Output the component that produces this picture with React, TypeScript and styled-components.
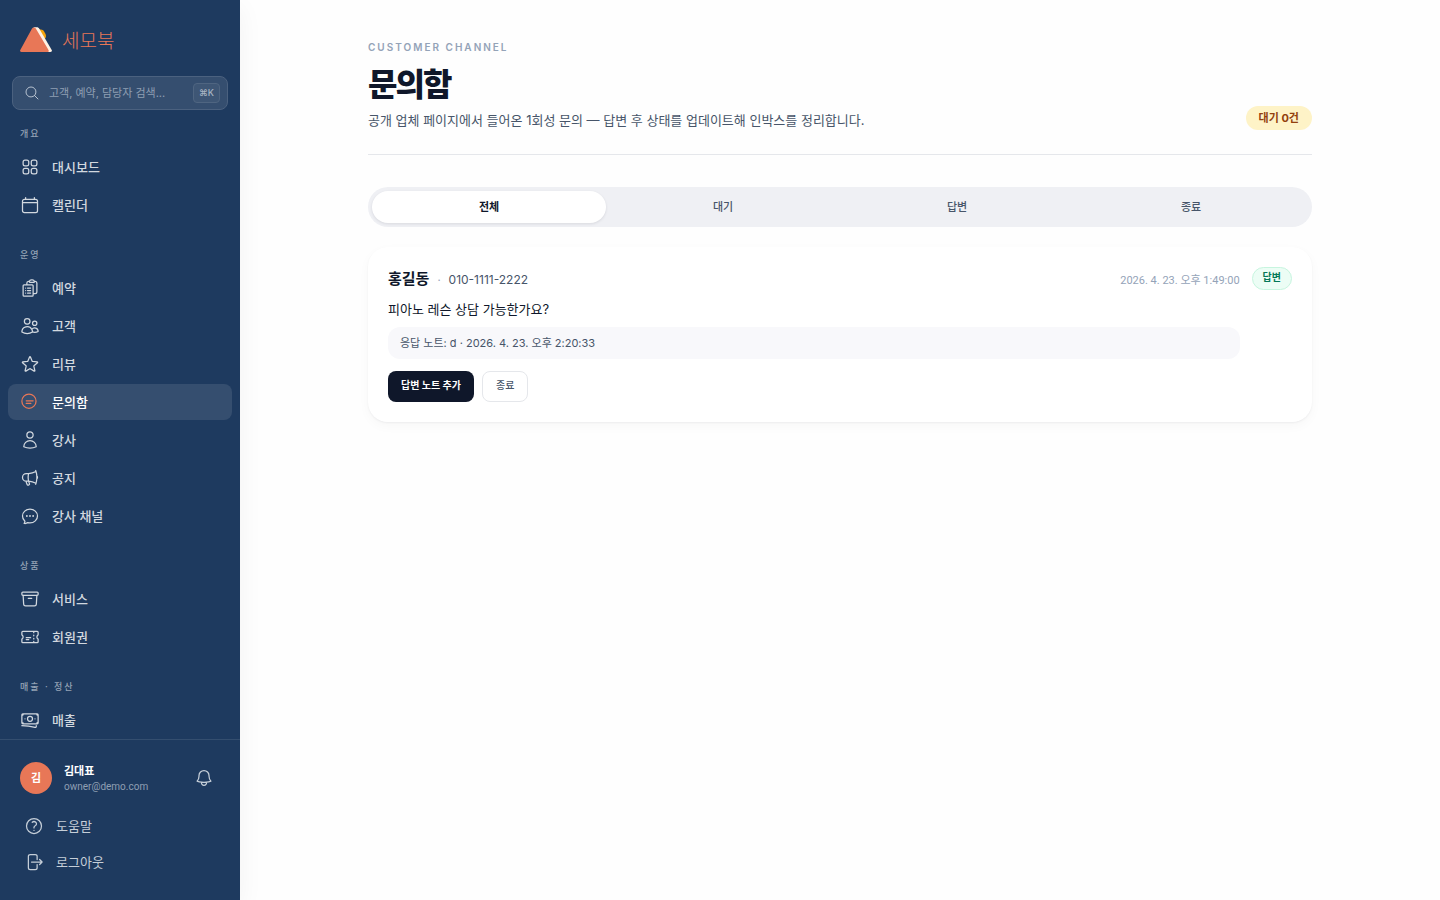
import React from "react";
import styled, { createGlobalStyle } from "styled-components";
import {
  HiOutlineSquares2X2, HiOutlineClipboardDocumentList, HiOutlineUsers, HiOutlineStar,
  HiOutlineUser, HiOutlineMegaphone, HiOutlineChatBubbleOvalLeftEllipsis, HiOutlineArchiveBox,
  HiOutlineTicket, HiOutlineBanknotes, HiOutlineBell, HiOutlineQuestionMarkCircle,
  HiOutlineArrowRightOnRectangle, HiOutlineMagnifyingGlass,
} from "react-icons/hi2";

const GlobalStyle = createGlobalStyle`
  *, *::before, *::after { box-sizing: border-box; }
  body {
    margin: 0;
    background: #fefefe;
    color: #0f172a;
    font-family: Inter, "Noto Sans CJK KR", sans-serif;
    -webkit-font-smoothing: antialiased;
  }
  h1, h2, p, ul { margin: 0; padding: 0; }
  ul { list-style: none; }
  button, input { font: inherit; }
  button { cursor: pointer; }
  a { color: inherit; text-decoration: none; }
`;

const Shell = styled.div`
  display: flex;
  min-height: 100vh;
`;

const Sidebar = styled.aside`
  position: sticky;
  top: 0;
  flex: 0 0 240px;
  min-width: 0;
  display: flex;
  flex-direction: column;
  height: 100vh;
  background: #1e3a5f;
  color: #d2d8df;
  box-shadow: 0 8px 24px rgba(15, 23, 42, 0.05);
`;

const Brand = styled.a`
  display: flex;
  align-items: flex-start;
  gap: 10px;
  flex: none;
  padding: 24px 20px 16px;
  color: #e87757;
  font-size: 19px;
  line-height: 36px;
  font-weight: 300;
`;

const SearchBox = styled.label`
  display: flex;
  align-items: center;
  gap: 9px;
  flex: none;
  height: 34px;
  margin: 0 12px;
  padding: 0 7px 0 11px;
  border: 1px solid #4b617f;
  border-radius: 8px;
  background: #354e6f;
  color: #b8c3d1;
`;

const SearchInput = styled.input`
  flex: 1;
  width: 0;
  min-width: 0;
  padding: 0;
  border: 0;
  outline: 0;
  background: transparent;
  color: #fff;
  font-size: 11px;
  line-height: 18px;
  &::placeholder { color: #8f9fb3; opacity: 1; }
`;

const Shortcut = styled.kbd`
  padding: 0 5px;
  border: 1px solid #4f6581;
  border-radius: 4px;
  background: #3e5675;
  color: #a9b5c4;
  font-family: inherit;
  font-size: 9px;
  font-weight: 500;
  line-height: 18px;
`;

const Nav = styled.nav`
  flex: 1;
  min-height: 0;
  overflow: hidden;
  padding: 16px 8px 0;
`;

const Group = styled.section`
  margin-bottom: 24px;
`;

const GroupTitle = styled.h2`
  padding: 0 12px;
  margin-bottom: 8px;
  color: #95a3b5;
  font-size: 9px;
  line-height: 15px;
  font-weight: 500;
  letter-spacing: 2px;
`;

const NavList = styled.ul`
  display: grid;
  gap: 2px;
`;

const NavLink = styled.a<{ $active?: boolean }>`
  display: flex;
  align-items: center;
  gap: 12px;
  height: 36px;
  padding: 0 12px;
  border-radius: 8px;
  background: ${(p) => (p.$active ? "#354e6f" : "transparent")};
  color: ${(p) => (p.$active ? "#fff" : "#d2d8df")};
  font-size: 13px;
  line-height: 20px;
  font-weight: 500;
  svg { color: ${(p) => (p.$active ? "#e87757" : "#d2d8df")}; }
`;

const Account = styled.footer`
  flex: none;
  padding: 16px 12px 20px;
  border-top: 1px solid #344e6f;
`;

const Profile = styled.div`
  display: flex;
  align-items: center;
  gap: 12px;
  height: 44px;
  padding: 0 8px;
  margin-bottom: 8px;
`;

const Avatar = styled.span`
  width: 32px;
  height: 32px;
  border-radius: 50%;
  background: #e87757;
  color: #fff;
  font-size: 11px;
  line-height: 32px;
  font-weight: 700;
  text-align: center;
`;

const Identity = styled.div`
  flex: 1;
  min-width: 0;
`;

const UserName = styled.p`
  color: #fff;
  font-size: 11px;
  line-height: 16px;
  font-weight: 700;
`;

const UserMail = styled.p`
  color: #8f9fb3;
  font-family: Roboto, "Noto Sans CJK KR", sans-serif;
  font-size: 10px;
  line-height: 15px;
`;

const BellButton = styled.button`
  display: grid;
  place-items: center;
  width: 32px;
  height: 32px;
  padding: 0;
  border: 0;
  border-radius: 8px;
  background: transparent;
  color: #c5ced8;
`;

const FooterAction = styled.button`
  display: flex;
  align-items: center;
  gap: 12px;
  width: 100%;
  height: 36px;
  padding: 0 12px;
  border: 0;
  background: transparent;
  color: #c5ced8;
  font-size: 13px;
  line-height: 20px;
`;

const Main = styled.main`
  flex: 1;
  min-width: 0;
  padding: 40px;
`;

const Content = styled.div`
  max-width: 944px;
  margin: 0 auto;
`;

const PageHeader = styled.header`
  display: flex;
  align-items: flex-end;
  justify-content: space-between;
  gap: 16px;
  padding-bottom: 24px;
  border-bottom: 1px solid #e5e7eb;
  margin-bottom: 32px;
`;

const Eyebrow = styled.p`
  color: #94a3b8;
  font-size: 10px;
  line-height: 15px;
  font-weight: 600;
  letter-spacing: 2px;
`;

const Title = styled.h1`
  margin: 8px 0 4px;
  font-size: 32px;
  line-height: 43px;
  font-weight: 900;
  letter-spacing: -2px;
`;

const Description = styled.p`
  color: #475569;
  font-size: 13px;
  line-height: 20px;
`;

const PendingBadge = styled.span`
  flex: none;
  padding: 0 13px;
  border-radius: 12px;
  background: #fef3c7;
  color: #92400e;
  font-size: 11px;
  line-height: 24px;
  font-weight: 700;
`;

const Tabs = styled.div`
  display: grid;
  grid-template-columns: repeat(4, 1fr);
  padding: 4px;
  border-radius: 20px;
  background: #eff0f4;
  margin-bottom: 20px;
`;

const Tab = styled.button<{ $active?: boolean }>`
  height: 32px;
  padding: 0;
  border: 0;
  border-radius: 16px;
  background: ${(p) => (p.$active ? "#fff" : "transparent")};
  box-shadow: ${(p) => (p.$active ? "0 1px 3px rgba(15, 23, 42, 0.1)" : "none")};
  color: ${(p) => (p.$active ? "#0f172a" : "#475569")};
  font-size: 11px;
  line-height: 16px;
  font-weight: ${(p) => (p.$active ? 700 : 500)};
`;

const Card = styled.article`
  display: flex;
  align-items: flex-start;
  gap: 12px;
  padding: 20px;
  border-radius: 20px;
  background: #fff;
  box-shadow: 0 1px 2px rgba(15, 23, 42, 0.05), 0 4px 12px rgba(15, 23, 42, 0.03);
`;

const CardBody = styled.div`
  flex: 1;
  min-width: 0;
`;

const CardHead = styled.div`
  display: flex;
  align-items: baseline;
  gap: 8px;
  height: 24px;
  line-height: 24px;
`;

const Customer = styled.h2`
  font-size: 15px;
  line-height: 24px;
  font-weight: 700;
`;

const Dot = styled.span`
  color: #94a3b8;
  font-size: 11px;
`;

const Phone = styled.span`
  color: #475569;
  font-size: 12px;
`;

const Received = styled.time`
  margin-left: auto;
  color: #94a3b8;
  font-family: Roboto, "Noto Sans CJK KR", sans-serif;
  font-size: 11px;
`;

const Message = styled.p`
  margin-top: 8px;
  font-size: 13px;
  line-height: 20px;
`;

const ReplyNote = styled.p`
  margin: 8px 0 12px;
  padding: 8px 12px;
  border-radius: 12px;
  background: #f8f8fb;
  color: #475569;
  font-size: 11px;
  line-height: 16px;
`;

const Actions = styled.div`
  display: flex;
  gap: 8px;
`;

const ActionButton = styled.button<{ $primary?: boolean }>`
  height: 31px;
  padding: 0 13px 3px;
  border: ${(p) => (p.$primary ? "0" : "1px solid #e5e7eb")};
  border-radius: 8px;
  background: ${(p) => (p.$primary ? "#0f172a" : "#fff")};
  color: ${(p) => (p.$primary ? "#fff" : "#475569")};
  font-size: 10px;
  line-height: 16px;
  font-weight: ${(p) => (p.$primary ? 700 : 500)};
`;

const StatusBadge = styled.span`
  flex: none;
  padding: 0 10px 2px;
  border: 1px solid #c7f5df;
  border-radius: 12px;
  background: #ecfdf5;
  color: #047857;
  font-size: 10px;
  line-height: 19px;
  font-weight: 700;
`;

const LogoMark = () => (
  <svg width="32" height="32" viewBox="0 0 32 32" aria-hidden="true">
    <path d="M18 5l4 .7c.9.2 1.400.7 1.800 1.400l1.700 3c.6 1.100.6 2.500 0 4l-1 1z" fill="#f5a30c" />
    <path d="M13.500 3.300h3.300c1.200 0 1.900.5 2.500 1.500l12.300 21c.7 1.200.2 2.200-1.200 2.200H26z" fill="#fff1e3" />
    <path d="M12 4.500c.8-1.500 3-1.500 3.800 0l12.700 21.500c.6 1.100.1 2-1 2H1.400c-1.200 0-1.700-1-1.100-2z" fill="#e87757" />
  </svg>
);

const CalendarIcon = () => (
  <svg width="20" height="20" viewBox="0 0 24 24" fill="none" stroke="currentColor" strokeWidth="1.500" strokeLinecap="round" strokeLinejoin="round" aria-hidden="true">
    <path d="M6.750 3v2.250M17.250 3v2.250M3 9.250h18M5.250 5.250h13.500A2.250 2.250 0 0 1 21 7.500v11.250A2.250 2.250 0 0 1 18.750 21H5.250A2.250 2.250 0 0 1 3 18.750V7.500a2.250 2.250 0 0 1 2.250-2.250z" />
  </svg>
);

const InquiryIcon = () => (
  <svg width="20" height="20" viewBox="0 0 24 24" fill="none" stroke="currentColor" strokeWidth="1.500" strokeLinecap="round" strokeLinejoin="round" aria-hidden="true">
    <circle cx="10.750" cy="11" r="8.500" />
    <path d="M7.500 10.500h8.250M7.500 13.750h5.500" />
  </svg>
);

const groups = [
  { title: "개요", items: [["대시보드", HiOutlineSquares2X2], ["캘린더", CalendarIcon]] },
  {
    title: "운영",
    items: [
      ["예약", HiOutlineClipboardDocumentList], ["고객", HiOutlineUsers], ["리뷰", HiOutlineStar],
      ["문의함", InquiryIcon], ["강사", HiOutlineUser], ["공지", HiOutlineMegaphone],
      ["강사 채널", HiOutlineChatBubbleOvalLeftEllipsis],
    ],
  },
  { title: "상품", items: [["서비스", HiOutlineArchiveBox], ["회원권", HiOutlineTicket]] },
  { title: "매출 · 정산", items: [["매출", HiOutlineBanknotes]] },
] as { title: string; items: [string, React.ComponentType<{ size?: number }>][] }[];

const tabs = ["전체", "대기", "답변", "종료"];

export default function App() {
  return (
    <>
      <GlobalStyle />
      <Shell>
        <Sidebar>
          <Brand href="#"><LogoMark />세모북</Brand>
          <SearchBox>
            <HiOutlineMagnifyingGlass size={16} />
            <SearchInput type="text" aria-label="검색" placeholder="고객, 예약, 담당자 검색..." />
            <Shortcut>⌘K</Shortcut>
          </SearchBox>
          <Nav>
            {groups.map((g) => (
              <Group key={g.title}>
                <GroupTitle>{g.title}</GroupTitle>
                <NavList>
                  {g.items.map(([label, Icon]) => (
                    <li key={label}>
                      <NavLink href="#" $active={label === "문의함"}>
                        <Icon size={20} />{label}
                      </NavLink>
                    </li>
                  ))}
                </NavList>
              </Group>
            ))}
          </Nav>
          <Account>
            <Profile>
              <Avatar>김</Avatar>
              <Identity>
                <UserName>김대표</UserName>
                <UserMail>owner@demo.com</UserMail>
              </Identity>
              <BellButton aria-label="알림"><HiOutlineBell size={20} /></BellButton>
            </Profile>
            <FooterAction><HiOutlineQuestionMarkCircle size={20} />도움말</FooterAction>
            <FooterAction><HiOutlineArrowRightOnRectangle size={20} />로그아웃</FooterAction>
          </Account>
        </Sidebar>
        <Main>
          <Content>
            <PageHeader>
              <div>
                <Eyebrow>CUSTOMER CHANNEL</Eyebrow>
                <Title>문의함</Title>
                <Description>공개 업체 페이지에서 들어온 1회성 문의 — 답변 후 상태를 업데이트해 인박스를 정리합니다.</Description>
              </div>
              <PendingBadge>대기 0건</PendingBadge>
            </PageHeader>
            <Tabs role="tablist">
              {tabs.map((t, i) => (
                <Tab key={t} role="tab" aria-selected={i === 0} $active={i === 0}>{t}</Tab>
              ))}
            </Tabs>
            <Card>
              <CardBody>
                <CardHead>
                  <Customer>홍길동</Customer>
                  <Dot>·</Dot>
                  <Phone>010-1111-2222</Phone>
                  <Received>2026. 4. 23. 오후 1:49:00</Received>
                </CardHead>
                <Message>피아노 레슨 상담 가능한가요?</Message>
                <ReplyNote>응답 노트: d · 2026. 4. 23. 오후 2:20:33</ReplyNote>
                <Actions>
                  <ActionButton $primary>답변 노트 추가</ActionButton>
                  <ActionButton>종료</ActionButton>
                </Actions>
              </CardBody>
              <StatusBadge>답변</StatusBadge>
            </Card>
          </Content>
        </Main>
      </Shell>
    </>
  );
}
